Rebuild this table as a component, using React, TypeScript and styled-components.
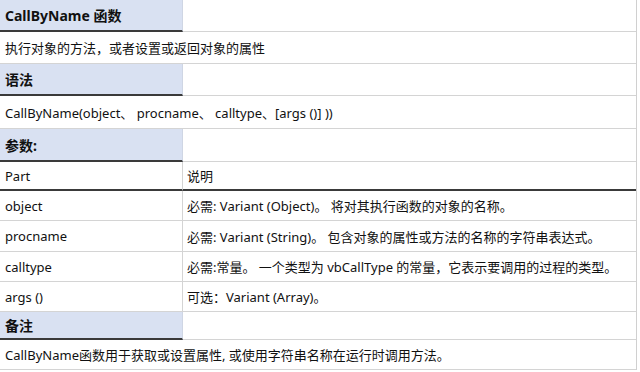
import styled, { createGlobalStyle } from "styled-components";

const GlobalStyle = createGlobalStyle`
  body {
    margin: 0;
    background: #ffffff;
    font-family: "Noto Sans", "Noto Sans CJK SC", sans-serif;
    color: #111111;
  }
`;

const params = [
  { part: "object", text: "必需: Variant (Object)。 将对其执行函数的对象的名称。", h: 30 },
  { part: "procname", text: "必需: Variant (String)。 包含对象的属性或方法的名称的字符串表达式。", h: 31 },
  { part: "calltype", text: "必需:常量。 一个类型为 vbCallType 的常量，它表示要调用的过程的类型。", h: 30 },
  { part: "args ()", text: "可选：Variant (Array)。", h: 30 },
];

export default function App() {
  return (
    <>
      <GlobalStyle />
      <Sheet>
        <Row $h={32}>
          <HeadCell>CallByName 函数</HeadCell>
          <Filler />
        </Row>
        <Row $h={32}>
          <WideCell>执行对象的方法，或者设置或返回对象的属性</WideCell>
        </Row>
        <Row $h={32}>
          <HeadCell>语法</HeadCell>
          <Filler />
        </Row>
        <Row $h={33}>
          <WideCell>CallByName(object、 procname、 calltype、[args ()] ))</WideCell>
        </Row>
        <Row $h={33}>
          <HeadCell>参数:</HeadCell>
          <Filler />
        </Row>
        <Row $h={29}>
          <Cell $dark>Part</Cell>
          <Cell $dark $right>说明</Cell>
        </Row>
        {params.map((p) => (
          <Row key={p.part} $h={p.h}>
            <Cell>{p.part}</Cell>
            <Cell $right>{p.text}</Cell>
          </Row>
        ))}
        <Row $h={28}>
          <HeadCell>备注</HeadCell>
          <Filler />
        </Row>
        <Row $h={30}>
          <WideCell>CallByName函数用于获取或设置属性, 或使用字符串名称在运行时调用方法。</WideCell>
        </Row>
      </Sheet>
    </>
  );
}

const Sheet = styled.div`
  width: 637px;
  display: flex;
  flex-direction: column;
  border-right: 1px solid #d0d0d0;
  box-sizing: border-box;
`;

const Row = styled.div<{ $h: number }>`
  height: ${(p) => p.$h}px;
  display: grid;
  grid-template-columns: 183px 1fr;
  font-size: 13px;
`;

const BaseCell = styled.div`
  display: flex;
  align-items: center;
  box-sizing: border-box;
  padding-left: 5px;
  white-space: nowrap;
  overflow: hidden;
  border-bottom: 1px solid #d4d4d4;
`;

const HeadCell = styled(BaseCell)`
  background: #d9e1f2;
  font-weight: 700;
  font-size: 14px;
  border-bottom: 2px solid #3a3a3a;
  border-right: 1px solid #cfd6e4;
`;

const Filler = styled(BaseCell)``;

const WideCell = styled(BaseCell)`
  grid-column: 1 / -1;
`;

const Cell = styled(BaseCell)<{ $dark?: boolean; $right?: boolean }>`
  padding-left: ${(p) => (p.$right ? "4px" : "5px")};
  border-right: ${(p) => (p.$right ? "none" : "1px solid #d4d4d4")};
  border-bottom: ${(p) => (p.$dark ? "2px solid #3a3a3a" : "1px solid #d4d4d4")};
`;
